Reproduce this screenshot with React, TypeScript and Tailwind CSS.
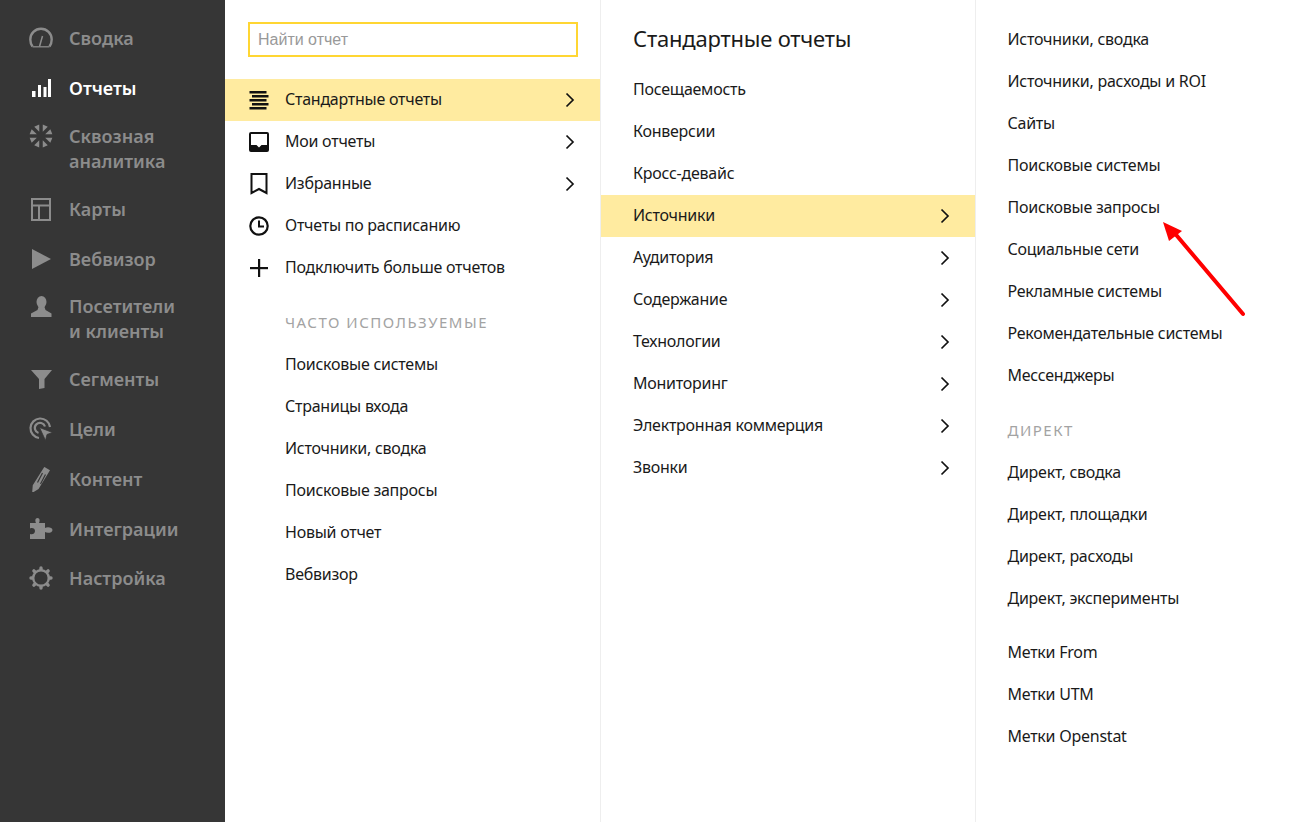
import React from "react";

const G = "#8c8c8c";
const F = "font-['Noto_Sans',sans-serif]";

const Gauge = () => (<svg width="24" height="22" viewBox="0 0 24 22" fill="none" stroke={G}><path d="M3.500 19.500C2 17.500 1.300 15 1.300 12.500A10.700 10.700 0 0 1 22.700 12.500C22.700 15 22 17.500 20.500 19.500" strokeWidth="2.400"/><path d="M3.500 19.800H20.500" strokeWidth="1.300"/><path d="M10.500 19.500L13.500 9" strokeWidth="1.500"/></svg>);
const Bars = () => (<svg width="20" height="18" viewBox="0 0 20 18" fill="#fff"><rect x="1" y="12" width="3.500" height="6"/><rect x="7" y="6" width="3" height="12"/><rect x="12.500" y="8" width="3" height="10"/><rect x="17" y="0" width="3" height="18"/></svg>);
const Burst = () => (<svg width="24" height="24" viewBox="0 0 24 24" fill={G}>{[22.5, 67.5, 112.5, 157.5, 202.5, 247.5, 292.5, 337.5].map((a) => (<path key={a} d="M12 7.500L9.300 0.800H14.700Z" transform={`rotate(${a} 12 12)`} />))}</svg>);
const MapIcon = () => (<svg width="20" height="23" viewBox="0 0 20 23" fill="none" stroke={G} strokeWidth="2"><rect x="1" y="1" width="18" height="21"/><path d="M1 7.500H19M8 7.500V22"/></svg>);
const Play = () => (<svg width="19" height="20" viewBox="0 0 19 20" fill={G}><path d="M0 0L19 10L0 20Z"/></svg>);
const User = () => (<svg width="21" height="21" viewBox="0 0 21 21" fill={G}><ellipse cx="10.500" cy="6" rx="5" ry="6"/><path d="M7.500 11h6l1 3 6 3.500V21H0v-3.500l6.500-3.500z"/></svg>);
const Funnel = () => (<svg width="21" height="19" viewBox="0 0 21 19" fill={G}><path d="M0 0H21L13.500 9V18L8 19V9Z"/></svg>);
const Target = () => (<svg width="24" height="24" viewBox="0 0 24 24" fill="none" stroke={G} strokeWidth="2.200"><path d="M10 21A9.800 9.800 0 1 1 21 10"/><path d="M9.500 16A5.200 5.200 0 1 1 16 9.500"/><path d="M10.500 10.500L23.500 15.500L18 17.500L16.500 23.500Z" fill={G} stroke="#363636" strokeWidth="0.800"/></svg>);
const Pencil = () => (<svg width="18" height="25" viewBox="0 0 18 25" fill="none" stroke={G} strokeWidth="1.500"><path d="M12.500 1L17 3.500L6 21.500L1 24.500L1.500 18.500Z" fill={G}/><path d="M10.500 6L5.500 15.500" stroke="#363636" strokeWidth="1.200"/><path d="M13.500 7.500L8.500 17" stroke="#363636" strokeWidth="1.200"/></svg>);
const Puzzle = () => (<svg width="24" height="24" viewBox="0 0 24 24" fill={G}><path d="M1 6H7C6 4 6 1 8.500 1C11 1 11 4 10 6H16V11C18 9.500 23.500 10 23.500 13C23.500 16 18 16.500 16 15V22H1V17C3.500 18 6 16.500 6 14C6 11.500 3.500 10.500 1 11.500Z"/></svg>);
const Gear = () => (<svg width="24" height="24" viewBox="0 0 24 24" fill="none" stroke={G} strokeLinecap="round"><circle cx="12" cy="12" r="7.800" strokeWidth="2.400"/><path d="M12 2V3.500M12 20.500V22M2 12H3.500M20.500 12H22M4.900 4.900L6 6M18 18L19.100 19.100M4.900 19.100L6 18M18 6L19.100 4.900" strokeWidth="3.400"/></svg>);

const Chevron = () => (<svg width="10" height="16" viewBox="0 0 10 16" fill="none" stroke="#111" strokeWidth="1.700"><path d="M1.500 1.500L8 8L1.500 14.500"/></svg>);

const Lines = () => (<svg width="20" height="20" viewBox="0 0 20 20" fill="#111"><rect x="0.500" y="1" width="17" height="2.500"/><rect x="3" y="5" width="16.500" height="2.500"/><rect x="0.500" y="9" width="17" height="2.500"/><rect x="3" y="13" width="16.500" height="2.500"/><rect x="0.500" y="17" width="17" height="2.500"/></svg>);
const Inbox = () => (<svg width="20" height="20" viewBox="0 0 20 20" fill="#111"><path fillRule="evenodd" d="M2 0H18A2 2 0 0 1 20 2V18A2 2 0 0 1 18 20H2A2 2 0 0 1 0 18V2A2 2 0 0 1 2 0ZM2 2V13H7.500L10 15.500L12.500 13H18V2Z"/></svg>);
const Bookmark = () => (<svg width="18" height="22" viewBox="0 0 18 22" fill="none" stroke="#111" strokeWidth="2"><path d="M1.500 1H16.500V20L9 16L1.500 20Z"/></svg>);
const Clock = () => (<svg width="20" height="20" viewBox="0 0 20 20" fill="none" stroke="#111"><circle cx="10" cy="10" r="8.700" strokeWidth="2.200"/><path d="M10 4.500V10.500H15" strokeWidth="2"/></svg>);
const Plus = () => (<svg width="18" height="18" viewBox="0 0 18 18" fill="#111"><rect x="0" y="8" width="18" height="2.200"/><rect x="8" y="0" width="2.200" height="18"/></svg>);

function Side({ icon, label, active, cls = "" }: { icon: React.ReactNode; label: string; active?: boolean; cls?: string }) {
  const two = label.includes("\n");
  return (
    <div className={`flex pl-[29px] ${two ? "py-[10.5px]" : "h-[50px] items-center"} ${cls}`}>
      <div className={`w-[24px] mr-[16px] flex justify-center shrink-0 ${two ? "h-[25px] items-center" : ""}`}>{icon}</div>
      <div className={`whitespace-pre-line text-[18px] leading-[25px] font-semibold ${active ? "text-white" : "text-[#8c8c8c]"}`}>{label}</div>
    </div>
  );
}

function Row({ label, icon, arrow, active, pad }: { label: string; icon?: React.ReactNode; arrow?: boolean; active?: boolean; pad: string }) {
  return (
    <div className={`h-[42px] flex items-center text-[16px] tracking-[-0.25px] text-[#1a1a1a] ${pad} ${active ? "bg-[#ffeba0]" : ""}`}>
      {icon !== undefined && <div className="w-[22px] mr-[15px] flex justify-center shrink-0">{icon}</div>}
      <span className="flex-1 pb-[2px]">{label}</span>
      {arrow && <Chevron />}
    </div>
  );
}

const Head = ({ children, pad }: { children: string; pad: string }) => (
  <div className={`h-[24px] flex items-center text-[15px] tracking-[1.5px] text-[#a3a3a3] ${pad}`}>{children}</div>
);

const c2pad = "pl-[23px] pr-[25px]";
const c2sub = "pl-[60px] pr-[25px]";
const c3pad = "pl-[32px] pr-[25px]";
const c4pad = "pl-[31.500px] pr-[25px]";

export default function App() {
  return (
    <div className={`relative flex h-[822px] w-full overflow-hidden bg-white ${F}`}>
      <aside className="w-[225px] shrink-0 bg-[#363636] pt-[13px]">
        <Side icon={<Gauge />} label="Сводка" />
        <Side icon={<Bars />} label="Отчеты" active />
        <Side icon={<Burst />} label={"Сквозная\nаналитика"} />
        <Side icon={<MapIcon />} label="Карты" />
        <Side icon={<Play />} label="Вебвизор" />
        <Side icon={<User />} label={"Посетители\nи клиенты"} cls="-mt-px" />
        <Side icon={<Funnel />} label="Сегменты" />
        <Side icon={<Target />} label="Цели" />
        <Side icon={<Pencil />} label="Контент" />
        <Side icon={<Puzzle />} label="Интеграции" />
        <Side icon={<Gear />} label="Настройка" cls="-mt-px" />
      </aside>

      <section className="w-[376px] shrink-0 border-r border-[#eeeeee] pt-[22px]">
        <div className="mx-[23px] h-[35px] w-[330px] border-2 border-[#ffd633] flex items-center pl-[8px] font-['Liberation_Sans',sans-serif] text-[16px] text-[#999]">Найти отчет</div>
        <div className="mt-[22px]">
          <Row pad={c2pad} active arrow icon={<Lines />} label="Стандартные отчеты" />
          <Row pad={c2pad} arrow icon={<Inbox />} label="Мои отчеты" />
          <Row pad={c2pad} arrow icon={<Bookmark />} label="Избранные" />
          <Row pad={c2pad} icon={<Clock />} label="Отчеты по расписанию" />
          <Row pad={c2pad} icon={<Plus />} label="Подключить больше отчетов" />
        </div>
        <div className="mt-[21px] mb-[10px]"><Head pad={c2sub}>ЧАСТО ИСПОЛЬЗУЕМЫЕ</Head></div>
        {["Поисковые системы", "Страницы входа", "Источники, сводка", "Поисковые запросы", "Новый отчет", "Вебвизор"].map((t) => (
          <Row key={t} pad={c2sub} label={t} />
        ))}
      </section>

      <section className="w-[375px] shrink-0 border-r border-[#eeeeee] pt-[21px]">
        <div className={`h-[34px] flex items-center text-[22px] tracking-[-0.2px] text-[#1a1a1a] ${c3pad}`}>Стандартные отчеты</div>
        <div className="mt-[14px]">
          <Row pad={c3pad} label="Посещаемость" />
          <Row pad={c3pad} label="Конверсии" />
          <Row pad={c3pad} label="Кросс-девайс" />
          <Row pad={c3pad} active arrow label="Источники" />
          {["Аудитория", "Содержание", "Технологии", "Мониторинг", "Электронная коммерция", "Звонки"].map((t) => (
            <Row key={t} pad={c3pad} arrow label={t} />
          ))}
        </div>
      </section>

      <section className="flex-1 pt-[19px]">
        {["Источники, сводка", "Источники, расходы и ROI", "Сайты", "Поисковые системы", "Поисковые запросы", "Социальные сети", "Рекламные системы", "Рекомендательные системы", "Мессенджеры"].map((t) => (
          <Row key={t} pad={c4pad} label={t} />
        ))}
        <div className="mt-[21px] mb-[10px]"><Head pad={c4pad}>ДИРЕКТ</Head></div>
        {["Директ, сводка", "Директ, площадки", "Директ, расходы", "Директ, эксперименты"].map((t) => (
          <Row key={t} pad={c4pad} label={t} />
        ))}
        <div className="h-[12px]" />
        {["Метки From", "Метки UTM", "Метки Openstat"].map((t) => (
          <Row key={t} pad={c4pad} label={t} />
        ))}
      </section>

      <svg className="absolute left-[1155px] top-[215px]" width="100" height="110" viewBox="0 0 100 110" fill="none">
        <path d="M88 99L17 15" stroke="#ff0000" strokeWidth="4" strokeLinecap="round" />
        <path d="M8 7L27 16L14 26Z" fill="#ff0000" />
      </svg>
    </div>
  );
}
